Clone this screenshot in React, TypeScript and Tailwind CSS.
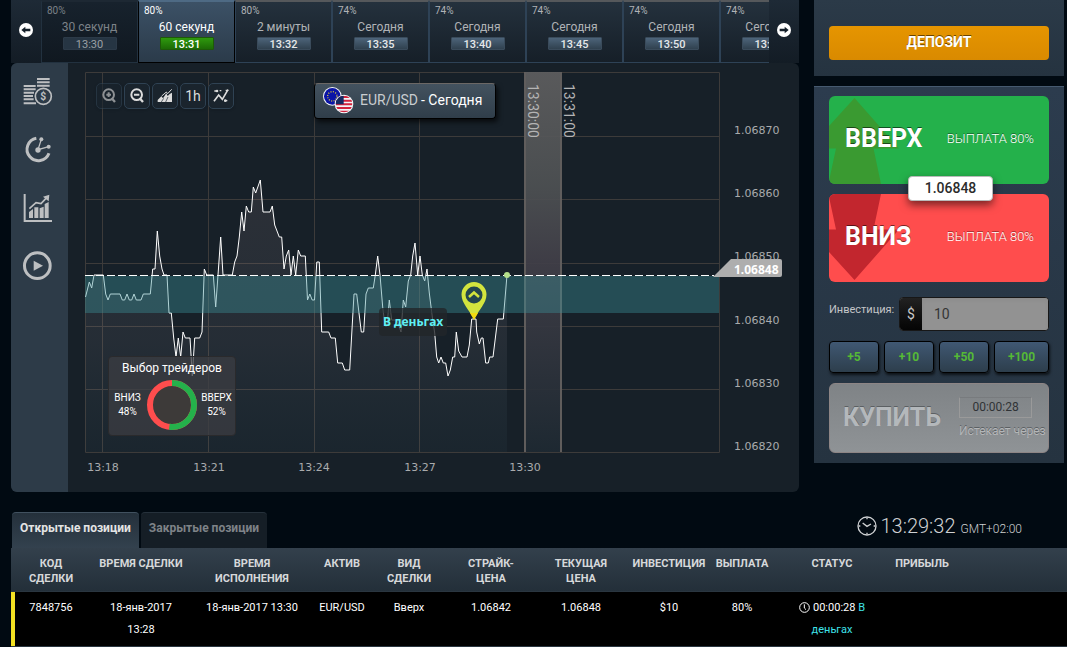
import React, { useState } from 'react';
import clsx from 'clsx';

type Expiry = {
    payout: string;
    label: string;
    time: string;
};

const EXPIRIES: Expiry[] = [
    { payout: '80%', label: '30 секунд', time: '13:30' },
    { payout: '80%', label: '60 секунд', time: '13:31' },
    { payout: '80%', label: '2 минуты', time: '13:32' },
    { payout: '74%', label: 'Сегодня', time: '13:35' },
    { payout: '74%', label: 'Сегодня', time: '13:40' },
    { payout: '74%', label: 'Сегодня', time: '13:45' },
    { payout: '74%', label: 'Сегодня', time: '13:50' },
    { payout: '74%', label: 'Сегодня', time: '13:55' },
];

const PRICE_AXIS = ['1.06870', '1.06860', '1.06850', '1.06840', '1.06830', '1.06820'];
const TIME_AXIS = ['13:18', '13:21', '13:24', '13:27', '13:30'];

const QUOTES =
    '17.5,234 21.3,219 23.7,225 26,212 35.3,212 37.7,231 40,237 42.3,231 52,231 54.3,237 56.7,237 59,231 61.3,237 63.7,237 66,231 68.3,237 73,237 75.3,231 82.3,231 84.7,206 87,206 ' +
    '89.3,168 91.7,193 94,206 96,212 99,212 101,250 103.3,250 105.7,275 108,294 110.3,275 112.7,294 115,269 117.3,275 122,275 124.3,313 126.7,275 131.7,275 134,269 136.3,206 138.7,212 145.3,212 ' +
    '147.7,244 150,212 152.7,174 155,212 164.3,212 166.7,199 169,193 171.3,174 173.7,149 176,168 178.3,143 180.7,149 183.3,149 185.3,124 187.7,130 192.3,117 195,149 202,149 204.3,143 206.7,162 ' +
    '211.3,174 213.7,174 216,206 218.3,193 220.7,187 223,212 225.3,193 227.7,212 230.3,187 232.7,193 237.3,193 239.5,237 241.8,231 244.2,237 246.5,237 248.8,199 251.3,199 253.7,269 260.7,269 ' +
    '263,275 267.3,275 269.7,300 274.3,300 276.7,307 281.7,307 286,231 288.7,231 293.3,269 295.7,269 298,231 300.3,225 305.3,225 307.3,212 309.7,193 312,212 314.7,244 317,263 319,263 321.3,237 ' +
    '323.7,257 328.7,257 333,269 335.3,237 337.7,244 340.3,218 342.7,212 344.7,193 347,180 349.7,212 352,193 354.3,212 356.7,218 359,206 361.3,230 364.7,257 366.7,270 368.7,294 370.7,300 373,294 ' +
    '375.3,300 377.7,300 380,313 382.3,307 384.7,294 386.7,294 388.3,269 390.7,288 394,294 399,294 401.3,282 403.7,256 408,256 408.7,269 411.3,281 413.3,275 415,275 417.7,300 420.3,300 421.7,294 ' +
    '425,294 429.7,256 435.3,256 439,212';

const COLUMNS = [
    { title: 'КОД\nСДЕЛКИ', width: 'w-20' },
    { title: 'ВРЕМЯ СДЕЛКИ', width: 'w-[100px]' },
    { title: 'ВРЕМЯ\nИСПОЛНЕНИЯ', width: 'w-[122px]' },
    { title: 'АКТИВ', width: 'w-[58px]' },
    { title: 'ВИД\nСДЕЛКИ', width: 'w-[76px]' },
    { title: 'СТРАЙК-\nЦЕНА', width: 'w-[88px]' },
    { title: 'ТЕКУЩАЯ\nЦЕНА', width: 'w-[92px]' },
    { title: 'ИНВЕСТИЦИЯ', width: 'w-[84px]' },
    { title: 'ВЫПЛАТА', width: 'w-[62px]' },
    { title: 'СТАТУС', width: 'w-[118px]' },
    { title: 'ПРИБЫЛЬ', width: '' },
];

const CoinsIcon = () => (
    <svg className="size-8" viewBox="0 0 96 96" fill="#bdbfc1">
        <path d="M45 6h38v6H45zM45 16h38v6H45zM45 26h38v6H45zM5 27h36v6H5zM5 37h36v6H5zM5 47h31v6H5zM5 57h28v6H5zM5 67h30v6H5zM5 79h37v6H5z" />
        <circle cx="64" cy="61" r="28" fill="#2d3b48" />
        <circle cx="64" cy="61" r="24" fill="none" stroke="#bdbfc1" strokeWidth="5" />
        <text x="64" y="72" textAnchor="middle" fontSize="31" fontWeight="700" fontFamily="Roboto, sans-serif">$</text>
    </svg>
);

const TimerIcon = () => (
    <svg className="size-8" viewBox="0 0 96 96" fill="#bdbfc1" stroke="#bdbfc1">
        <path d="M43 12.500A34 34 0 1 0 81 58" fill="none" strokeWidth="9" />
        <path d="M58 16L48 47L80 38" fill="none" strokeWidth="4" />
        <circle cx="58" cy="16" r="6" stroke="none" />
        <circle cx="80" cy="38" r="6" stroke="none" />
        <circle cx="48" cy="48" r="8" stroke="none" />
    </svg>
);

const GrowthIcon = () => (
    <svg className="size-8" viewBox="0 0 96 96" fill="#bdbfc1">
        <path d="M5 6h6v78h79v6H5z" />
        <path d="M21 60l12-9v27H21zM37 46h12v32H37zM53 49l12-5v34H53zM68 36l12-6v48H68z" />
        <path d="M22 50L42 32L57 35L75 16" fill="none" stroke="#bdbfc1" strokeWidth="5" />
        <path d="M63 14L82 8L80 28z" />
    </svg>
);

const PlayIcon = () => (
    <svg className="size-8" viewBox="0 0 96 96" fill="#bdbfc1">
        <circle cx="46" cy="47" r="38.500" fill="none" stroke="#bdbfc1" strokeWidth="9" />
        <path d="M35 32L63 47L35 62z" />
    </svg>
);

const ArrowBadge: React.FC<{ flip?: boolean }> = ({ flip }) => (
    <svg className={clsx('size-[14px]', flip && 'rotate-180')} viewBox="0 0 42 42">
        <circle cx="21" cy="21" r="21" fill="#fff" />
        <path d="M7 21L19 11v6h15v8H19v6z" fill="#15202a" />
    </svg>
);

const ZoomGlyph: React.FC<{ plus?: boolean }> = ({ plus }) => (
    <svg className="size-4" viewBox="0 0 48 48" fill="none" stroke="currentColor" strokeWidth="6">
        <circle cx="23" cy="20" r="16" />
        <path d={plus ? 'M16 20h14M23 13v14' : 'M15 20h16'} />
        <path d="M32 31L42 42" strokeWidth="7" />
    </svg>
);

const AreaGlyph = () => (
    <svg className="size-4" viewBox="0 0 48 48" fill="currentColor">
        <path d="M2 42V36L13 25L18 31L28 16L32 24L38 18L45 14V42z" />
        <path d="M14 24L28 12L32 17L44 4" fill="none" stroke="currentColor" strokeWidth="3" />
        <path d="M13 42L20 31M26 42L33 27" stroke="#1a2530" strokeWidth="2" />
    </svg>
);

const IndicatorGlyph = () => (
    <svg className="size-4" viewBox="0 0 48 48" fill="none" stroke="currentColor" strokeWidth="5">
        <path d="M3 40L17 21L28 34L45 5" />
        <path d="M4 9h11M33 38h10M20 8h5M38 7h8" strokeWidth="4" />
        <circle cx="12" cy="9" r="4" fill="currentColor" stroke="none" />
        <circle cx="37" cy="38" r="4" fill="currentColor" stroke="none" />
    </svg>
);

const AssetFlags = () => (
    <svg className="h-7 w-8" viewBox="0 0 96 84">
        <defs>
            <clipPath id="usClip"><circle cx="66" cy="54" r="25" /></clipPath>
        </defs>
        <circle cx="31" cy="31" r="28" fill="#f3f5f7" />
        <circle cx="31" cy="31" r="25" fill="#0b14a6" />
        <circle cx="31" cy="31" r="14" fill="none" stroke="#d8c33a" strokeWidth="4" strokeDasharray="3 4.330" />
        <circle cx="66" cy="54" r="28" fill="#f3f5f7" />
        <g clipPath="url(#usClip)">
            <path d="M40 33h52M40 44h52M40 55h52M40 66h52M40 77h52" stroke="#d2233c" strokeWidth="6" />
            <path d="M40 28h25v27H40z" fill="#152a62" />
        </g>
    </svg>
);

const ExpiryStrip: React.FC = () => {
    const [active, setActive] = useState(1);

    return (
        <div className="flex h-[63px] bg-[#17212b]">
            <button aria-label="Назад" className="flex w-[30px] shrink-0 items-center justify-center bg-linear-to-b from-[#1e2a36] to-[#131c25] pb-1">
                <ArrowBadge />
            </button>
            <div className="flex min-w-0 flex-1 overflow-hidden">
                {EXPIRIES.map((item, index) => (
                    <button
                        key={index}
                        onClick={() => setActive(index)}
                        className={clsx(
                            'flex w-[97px] shrink-0 flex-col items-center border border-t-2 text-center',
                            index === active && 'border-black border-t-[#4e6a84] bg-linear-to-b from-[#3c5166] to-[#2b3b4a] text-white',
                            index !== active && index === 0 && 'border-[#22313f] border-t-[#1d2833] bg-linear-to-b from-[#17222d] to-[#101820] text-[#7c8288]',
                            index !== active && index > 0 && 'border-[#2e4256] border-t-[#55585b] bg-linear-to-b from-[#24313d] to-[#161f28] text-[#b0b3b6]'
                        )}
                    >
                        <span className="w-full pl-[5px] text-left text-[10px] leading-[17px]">{item.payout}</span>
                        <span className="text-xs leading-[17px]">{item.label}</span>
                        <span
                            className={clsx(
                                'mt-px h-[13px] w-[54px] overflow-hidden rounded-[1px] border text-[11px] leading-[13px]',
                                index === active && 'border-[#1d5a08] bg-linear-to-b from-[#2f9a0e] to-[#1c6a06] font-medium text-white',
                                index !== active && index === 0 && 'border-[#2c3a48] bg-[#263543] text-[#9ba0a5]',
                                index !== active && index > 0 && 'border-[#3a4b5b] bg-linear-to-b from-[#4d647a] to-[#30414f] font-medium text-[#e6e8ea]'
                            )}
                        >
                            {item.time}
                        </span>
                    </button>
                ))}
            </div>
            <button aria-label="Вперёд" className="flex w-[30px] shrink-0 items-center justify-center bg-linear-to-b from-[#1e2a36] to-[#131c25] pb-1">
                <ArrowBadge flip />
            </button>
        </div>
    );
};

const PriceChart: React.FC = () => (
    <svg className="block w-full" viewBox="0 0 731 429">
        <defs>
            <linearGradient id="areaFill" x1="0" y1="117" x2="0" y2="389" gradientUnits="userSpaceOnUse">
                <stop offset="0" stopColor="#ffd0d0" stopOpacity="0.09" />
                <stop offset="0.600" stopColor="#e0d8e8" stopOpacity="0.070" />
                <stop offset="1" stopColor="#8fd8f0" stopOpacity="0.030" />
            </linearGradient>
            <linearGradient id="deadline" x1="0" y1="0" x2="0" y2="1">
                <stop offset="0" stopColor="#5e5e5f" />
                <stop offset="0.300" stopColor="#4e5153" />
                <stop offset="0.500" stopColor="#413f48" />
                <stop offset="1" stopColor="#1e2932" />
            </linearGradient>
        </defs>

        <g stroke="#3d3b3a">
            <path fill="none" d="M17.500 9.500H651.500V389.500H17.500z" />
            <path d="M17 73.500H651M17 136.500H651M17 200.500H651M17 263.500H651M17 326.500H651" />
            <path d="M34.500 9V389M140.500 9V389M246.500 9V389M351.500 9V389" />
        </g>

        <rect x="456" y="9" width="38" height="380" fill="url(#deadline)" fillOpacity="0.930" />
        <path d="M457 9V389M493 9V389" stroke="#605d5c" strokeWidth="2" />

        <polygon points={`17.5,389 ${QUOTES} 439,389`} fill="url(#areaFill)" />
        <polyline points={QUOTES} fill="none" stroke="#fff" strokeLinejoin="round" />
        <rect x="17" y="213" width="634" height="37" fill="#3c9098" fillOpacity="0.400" />
        <path d="M17 212.500H646" stroke="#fff" strokeDasharray="8 3" />
        <circle cx="439" cy="212" r="3" fill="#b5e08a" />

        <g fontFamily="Roboto, sans-serif" fontSize="14" fill="#b4b4b4">
            <text transform="translate(460 21) rotate(90)">13:30:00</text>
            <text transform="translate(496 21) rotate(90)">13:31:00</text>
        </g>

        <path d="M406 256C401 247 393.500 240 393.500 231.500A12.500 12.500 0 0 1 418.500 231.500C418.500 240 411 247 406 256z" fill="#d3e43e" />
        <path d="M402 250h8l-4 7z" fill="#f4dc10" />
        <circle cx="406" cy="232" r="8.500" fill="#24464e" />
        <path d="M401 234L406 229.500L411 234" fill="none" stroke="#d3e43e" strokeWidth="2.500" />

        <rect x="311" y="245" width="68" height="28" rx="4" fill="#222629" fillOpacity="0.800" />
        <text x="345" y="263" textAnchor="middle" fontFamily="'Noto Sans', sans-serif" fontSize="12" fontWeight="700" fill="#5ff0f5">В деньгах</text>

        <g fontFamily="'DejaVu Sans', sans-serif" fontSize="11" fill="#a9abad">
            {PRICE_AXIS.map((price, index) => (
                <text key={price} x="666" y={71 + Math.round(index * 63.2)}>{price}</text>
            ))}
            {TIME_AXIS.map((time, index) => (
                <text key={time} x={35 + Math.round(index * 105.6)} y="408" textAnchor="middle">{time}</text>
            ))}
        </g>

        <path d="M645 214L663 196H712a2 2 0 0 1 2 2V212a2 2 0 0 1-2 2z" fill="#aeaeae" />
        <text x="666" y="211" fontFamily="'Noto Sans', sans-serif" fontSize="12" fontWeight="700" fill="#fff">1.06848</text>
    </svg>
);

const TradersChoice: React.FC = () => (
    <div className="absolute top-[293px] left-10 w-32 rounded-sm border border-[#2a2a2c] bg-[#3c3e43]/75 pb-1 text-center text-white">
        <p className="text-xs leading-[22px]">Выбор трейдеров</p>
        <div className="grid grid-cols-[1fr_52px_1fr] items-center text-[10px] leading-[14px]">
            <div>ВНИЗ<br />48%</div>
            <svg className="size-[52px]" viewBox="0 0 52 52">
                <circle cx="26" cy="26" r="22" fill="#3d3a39" stroke="#ff4d4d" strokeWidth="6" />
                <circle cx="26" cy="26" r="22" fill="none" stroke="#24b14b" strokeWidth="6" pathLength="100" strokeDasharray="52 48" transform="rotate(-90 26 26)" />
            </svg>
            <div>ВВЕРХ<br />52%</div>
        </div>
    </div>
);

const ChartPanel: React.FC = () => {
    const tool = 'flex h-[26px] min-w-[26px] items-center justify-center rounded-[5px] border border-[#2f4253] bg-[#1a242d] px-1 text-sm text-[#dcdcdc] shadow';

    return (
        <div className="flex overflow-hidden rounded-md bg-[#172028]">
            <nav className="flex w-[57px] shrink-0 flex-col items-center gap-[26px] bg-[#2d3b48] pt-[13px] pr-[3px]">
                <button aria-label="Активы"><CoinsIcon /></button>
                <button aria-label="Экспирация"><TimerIcon /></button>
                <button aria-label="Аналитика"><GrowthIcon /></button>
                <button aria-label="Видео"><PlayIcon /></button>
            </nav>
            <div className="relative min-w-0 flex-1">
                <PriceChart />
                <div className="absolute top-5 left-7 flex gap-0.5">
                    <button aria-label="Увеличить" className={clsx(tool, 'opacity-60')}><ZoomGlyph plus /></button>
                    <button aria-label="Уменьшить" className={tool}><ZoomGlyph /></button>
                    <button aria-label="Тип графика" className={tool}><AreaGlyph /></button>
                    <button className={tool}>1h</button>
                    <button aria-label="Индикаторы" className={tool}><IndicatorGlyph /></button>
                </div>
                <button className="absolute top-5 left-[246px] flex h-9 w-[182px] items-center rounded-sm border border-black border-t-[#6b6765] bg-linear-to-b from-[#43525f] to-[#303e4a] pb-0.5 pl-[7px] text-sm whitespace-nowrap text-white shadow-[2px_3px_5px_#000a]">
                    <AssetFlags />
                    <span className="pl-[6px] text-[#c9cdd0]">EUR/USD</span>
                    <span className="pl-[3px]">- Сегодня</span>
                </button>
                <TradersChoice />
            </div>
        </div>
    );
};

const DirectionButton: React.FC<{ title: string; down?: boolean }> = ({ title, down }) => (
    <button
        className={clsx(
            'relative flex h-[88px] w-full items-center justify-between overflow-hidden rounded-md pr-[15px] pb-0.5 pl-4 text-white',
            down ? 'bg-[#ff4d4d]' : 'bg-[#24b14b]'
        )}
    >
        <svg className={clsx('absolute top-0 left-0 h-[88px] w-[72px]', down && '-scale-y-100')} viewBox="0 0 72 88">
            <path d="M25.500 2L70 52.500H44.500L52 88H0V85L7 52.500H0V30z" fill={down ? '#c2262e' : '#3a9a31'} />
        </svg>
        <span className="relative text-[25px] font-bold text-shadow-[0_-1px_0_#0008]">{title}</span>
        <span className="relative text-[13px] font-light text-shadow-[0_-1px_0_#0006]">ВЫПЛАТА 80%</span>
    </button>
);

const TradePanel: React.FC = () => {
    const [amount, setAmount] = useState('10');

    return (
        <aside className="w-[250px] shrink-0">
            <div className="bg-linear-to-b from-[#2b3a48] to-[#253340] px-[15px] pt-[26px] pb-4">
                <button className="h-[34px] w-full rounded-sm bg-linear-to-b from-[#e69500] to-[#d98a00] pb-0.5 text-sm font-bold text-white text-shadow-[0_-1px_0_#0008]">
                    ДЕПОЗИТ
                </button>
            </div>

            <div className="mt-[10px] flex flex-col gap-[10px] border-t border-[#465a70] bg-linear-to-b from-[#2c3c4e] to-[#253340] px-[15px] pt-[9px] pb-[10px]">
                <div className="relative flex flex-col gap-[10px]">
                    <DirectionButton title="ВВЕРХ" />
                    <DirectionButton title="ВНИЗ" down />
                    <span className="absolute top-20 left-[79px] w-[85px] rounded-sm border border-[#b9b9b9] bg-white text-center text-sm leading-[23px] font-medium text-[#2b2b2b] shadow-[0_4px_8px_#0008]">
                        1.06848
                    </span>
                </div>

                <div className="mt-[5px] flex h-[34px] justify-between">
                    <label htmlFor="amount" className="text-[11px] leading-[26px] text-[#c3c5c7]">Инвестиция:</label>
                    <div className="flex w-[150px] overflow-hidden rounded-sm border border-[#171717] bg-[#929292]">
                        <span className="w-[22px] shrink-0 bg-linear-to-b from-[#222] to-[#050505] text-center text-sm leading-8 text-[#c8c8c8]">$</span>
                        <input
                            id="amount"
                            value={amount}
                            onChange={e => setAmount(e.target.value)}
                            className="w-full min-w-0 bg-[#929292] pl-3 text-sm text-[#353535] inset-shadow-sm outline-none"
                        />
                    </div>
                </div>

                <div className="grid grid-cols-[10fr_10fr_10fr_11fr] gap-[5px]">
                    {[5, 10, 50, 100].map(step => (
                        <button
                            key={step}
                            onClick={() => setAmount(String(Number(amount) + step))}
                            className="h-8 rounded-sm border border-black bg-linear-to-b from-[#405873] to-[#2d3e4c] text-xs font-bold text-[#55b936] shadow-[1px_2px_3px_#000a]"
                        >
                            +{step}
                        </button>
                    ))}
                </div>

                <button disabled className="flex h-[70px] items-center gap-[18px] rounded-md border border-[#8d8585] bg-linear-to-b from-[#7f8386] to-[#8f9396] pl-[13px] text-left">
                    <span className="text-[25px] font-bold text-[#b4b8bb] text-shadow-[0_-1px_0_#5c6063]">КУПИТЬ</span>
                    <span className="flex flex-col gap-[5px] whitespace-nowrap">
                        <span className="w-[73px] border border-[#9a9a9a] border-t-[#787b7e] text-center text-xs leading-[19px] text-[#303336]">00:00:28</span>
                        <span className="text-xs leading-4 text-[#b4b6b8] text-shadow-[0_-1px_0_#5c6063]">Истекает через</span>
                    </span>
                </button>
            </div>
        </aside>
    );
};

const Positions: React.FC = () => (
    <section className="mt-5 pl-[11px]">
        <div className="flex items-start justify-between pl-px">
            <div className="flex gap-0.5 text-xs font-bold">
                <button className="h-9 rounded-t-sm border-t border-[#41515f] bg-linear-to-b from-[#24303b] to-[#33414e] px-2 pb-[5px] text-[#e4e4e4]">Открытые позиции</button>
                <button className="h-9 rounded-t-sm border-t border-[#26313b] bg-[#151e26] px-2 pb-[5px] text-[#7e8388]">Закрытые позиции</button>
            </div>
            <div className="flex items-center pr-[45px] font-light text-[#cfd1d3]">
                <svg className="size-5" viewBox="0 0 60 60" fill="none" stroke="currentColor" strokeWidth="4">
                    <circle cx="30" cy="30" r="27" />
                    <path d="M17 21L30 31L42 24M30 5v5M30 50v5M5 30h5M50 30h5" />
                </svg>
                <span className="pl-1 text-xl">13:29:32</span>
                <span className="pt-[5px] pl-[5px] text-xs">GMT+02:00</span>
            </div>
        </div>

        <table className="w-full table-fixed border-collapse text-center text-[11px] whitespace-pre-line">
            <thead>
                <tr className="h-[43px] bg-linear-to-b from-[#33404c] to-[#232f39] align-top leading-[15px] text-[#d6d8da]">
                    {COLUMNS.map(col => (
                        <th key={col.title} className={clsx('pt-2 font-bold last:pr-[114px]', col.width)}>{col.title}</th>
                    ))}
                </tr>
            </thead>
            <tbody>
                <tr className="h-[55px] border-y border-[#2a3640] bg-black align-top leading-[22px] text-white *:pt-[5px]">
                    <td className="shadow-[inset_4px_0_0_#f3e122]">7848756</td>
                    <td>{'18-янв-2017\n13:28'}</td>
                    <td>18-янв-2017 13:30</td>
                    <td>EUR/USD</td>
                    <td>Вверх</td>
                    <td>1.06842</td>
                    <td>1.06848</td>
                    <td>$10</td>
                    <td>80%</td>
                    <td>
                        <svg className="mr-[3px] inline size-[11px] align-[-2px]" viewBox="0 0 33 33" fill="none" stroke="#fff" strokeWidth="3">
                            <circle cx="16.500" cy="16.500" r="14.500" />
                            <path d="M16 7v11l5 5" />
                        </svg>
                        00:00:28 <span className="text-[#3fe3ea]">В</span>
                        <br />
                        <span className="text-[#3fe3ea]">деньгах</span>
                    </td>
                    <td></td>
                </tr>
            </tbody>
        </table>
    </section>
);

const App: React.FC = () => (
    <div className="min-h-screen overflow-hidden bg-[#010a12] font-[Roboto,sans-serif]">
        <div className="flex items-start gap-[15px] pr-[3px] pl-[11px]">
            <main className="min-w-0 flex-1">
                <ExpiryStrip />
                <ChartPanel />
            </main>
            <TradePanel />
        </div>
        <Positions />
    </div>
);

export default App;
